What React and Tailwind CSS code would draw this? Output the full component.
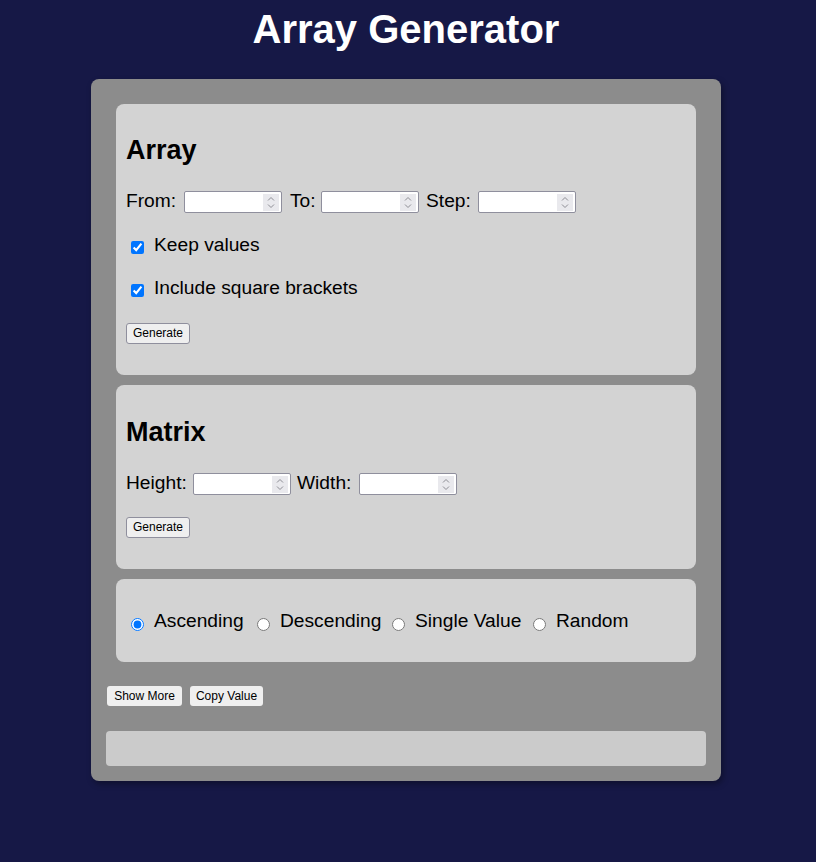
import React from "react";

function NumInput() {
  return (
    <div className="flex h-[22px] w-[98px] items-center rounded-[2px] border border-[#8f8f9d] bg-white pr-[2px]">
      <input type="text" className="h-full min-w-0 flex-1 bg-transparent px-[2px] text-[13.33px] outline-none" />
      <div className="flex h-[17px] w-[16px] items-center justify-center bg-[#e9e9ed]">
        <svg width="16" height="17" viewBox="0 0 16 17" fill="none">
          <path d="M5 6.5 L8 3.5 L11 6.5" stroke="#8d8d94" strokeWidth="1" />
          <path d="M5 10.5 L8 13.5 L11 10.5" stroke="#8d8d94" strokeWidth="1" />
        </svg>
      </div>
    </div>
  );
}

function CheckRow({ label, className }) {
  return (
    <label className={"flex h-[23px] items-center " + className}>
      <input type="checkbox" defaultChecked className="ml-[5px] mt-[5px] h-[13px] w-[13px]" />
      <span className="ml-[10px]">{label}</span>
    </label>
  );
}

function Radio({ label, checked, width, first }) {
  return (
    <label className="flex items-center">
      <input
        type="radio"
        name="order"
        defaultChecked={checked}
        className={(first ? "ml-[5px] " : "") + "mt-[7px] h-[13px] w-[13px]"}
      />
      <span className={"ml-[10px] " + width}>{label}</span>
    </label>
  );
}

function GenButton() {
  return (
    <button className="h-[21px] w-[64px] self-start rounded-[3px] border border-[#8f8f9d] bg-[#efefef] text-[12px] leading-[19px] text-black">
      Generate
    </button>
  );
}

export default function App() {
  return (
    <div className="min-h-[862px] w-full bg-[#161846] font-['Liberation_Sans',Arial,sans-serif] text-black">
      <div className="w-[812px]">
        <h1 className="pt-[6px] text-center text-[40px] font-bold leading-[46px] text-white">
          Array Generator
        </h1>
        <div className="ml-[91px] mt-[27px] flex w-[630px] flex-col rounded-[8px] bg-[#8c8c8c] p-[15px] shadow-[2px_3px_6px_rgba(0,0,0,0.35)]">
          {/* Array card */}
          <div className="mx-[10px] mt-[10px] flex flex-col rounded-[8px] bg-[#d3d3d3] pb-[31px] pl-[10px] pt-[31px] text-[19.2px] leading-[23px]">
            <h2 className="text-[27px] font-bold leading-[31px]">Array</h2>
            <div className="mt-[25px] flex h-[22px] items-start leading-[19px]">
              <span className="w-[58px]">From:</span>
              <NumInput />
              <span className="ml-[8px] w-[31px]">To:</span>
              <NumInput />
              <span className="ml-[7px] w-[52px]">Step:</span>
              <NumInput />
            </div>
            <CheckRow label="Keep values" className="mt-[20px]" />
            <CheckRow label="Include square brackets" className="mt-[20px]" />
            <div className="mt-[24px] flex">
              <GenButton />
            </div>
          </div>

          {/* Matrix card */}
          <div className="mx-[10px] mt-[10px] flex flex-col rounded-[8px] bg-[#d3d3d3] pb-[31px] pl-[10px] pt-[32px] text-[19.2px] leading-[23px]">
            <h2 className="text-[27px] font-bold leading-[31px]">Matrix</h2>
            <div className="mt-[25px] flex h-[22px] items-start leading-[19px]">
              <span className="w-[67px]">Height:</span>
              <NumInput />
              <span className="ml-[6px] w-[62px]">Width:</span>
              <NumInput />
            </div>
            <div className="mt-[22px] flex">
              <GenButton />
            </div>
          </div>

          {/* Radio card */}
          <div className="mx-[10px] mt-[10px] flex h-[83px] items-center rounded-[8px] bg-[#d3d3d3] pl-[10px] text-[19.2px] leading-[23px]">
            <Radio label="Ascending" checked first width="w-[103px]" />
            <Radio label="Descending" width="w-[112px]" />
            <Radio label="Single Value" width="w-[118px]" />
            <Radio label="Random" width="" />
          </div>

          <div className="ml-[1px] mt-[24px] flex gap-[8px]">
            <button className="h-[20px] w-[75px] rounded-[3px] bg-[#efefef] text-[12px] leading-[20px] text-black">
              Show More
            </button>
            <button className="h-[20px] w-[73px] rounded-[3px] bg-[#efefef] text-[12px] leading-[20px] text-black">
              Copy Value
            </button>
          </div>

          <div className="mt-[25px] h-[35px] rounded-[4px] bg-[#cbcbcb]" />
        </div>
      </div>
    </div>
  );
}
